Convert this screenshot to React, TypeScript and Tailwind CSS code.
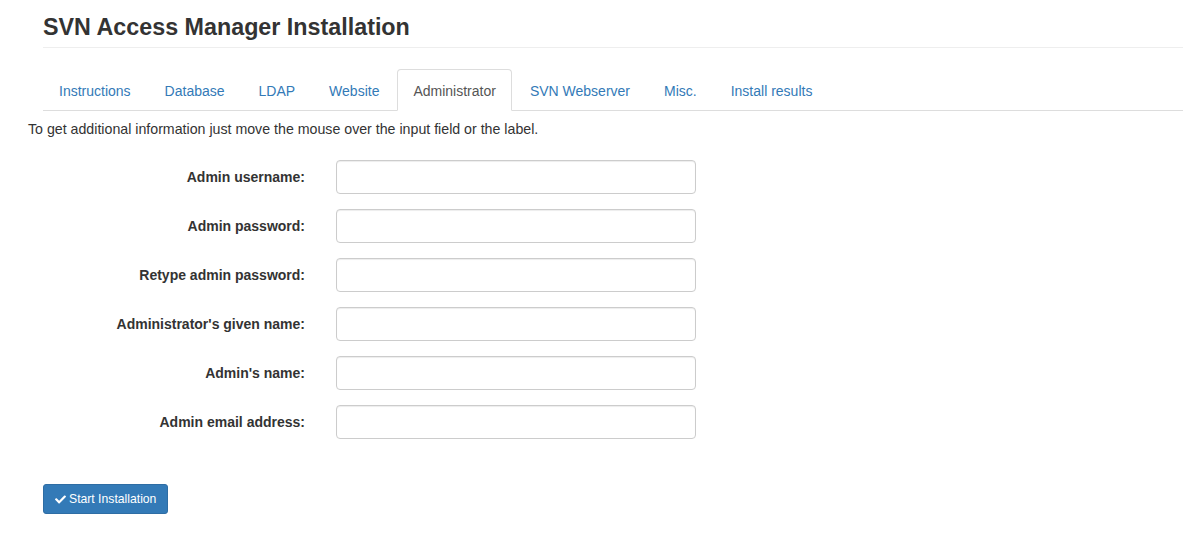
import { FaCheck } from 'react-icons/fa';

const tabs = ['Instructions', 'Database', 'LDAP', 'Website', 'Administrator', 'SVN Webserver', 'Misc.', 'Install results'];

const fields = [
  'Admin username:',
  'Admin password:',
  'Retype admin password:',
  "Administrator's given name:",
  "Admin's name:",
  'Admin email address:',
];

export default function App() {
  return (
    <div className="min-h-[555px] bg-white text-[#333] font-['Liberation_Sans',Arial,sans-serif]">
      {/* Header */}
      <div className="ml-[43px] mr-[10px] pt-[12px]">
        <h1 className="text-[23.3px] leading-[30px] font-bold text-[#333] pb-[5px] border-b border-[#eee]">
          SVN Access Manager Installation
        </h1>
      </div>

      {/* Tabs */}
      <div className="ml-[43px] mr-[10px] mt-[21px] flex border-b border-[#ddd]">
        {tabs.map((t) => {
          const active = t === 'Administrator';
          return (
            <div
              key={t}
              className={
                active
                  ? 'mr-[2px] -mb-px px-[15px] pt-[11px] pb-[9px] text-[14px] leading-[20px] text-[#555] bg-white border border-[#ddd] border-b-transparent rounded-t-[4px]'
                  : 'mr-[2px] -mb-px px-[15px] pt-[11px] pb-[9px] text-[14px] leading-[20px] text-[#337ab7] border border-transparent'
              }
            >
              {t}
            </div>
          );
        })}
      </div>

      <p className="ml-[28px] mt-[8px] text-[14.2px] leading-[20px]">
        To get additional information just move the mouse over the input field or the label.
      </p>

      {/* Form */}
      <div className="mt-[21px] flex flex-col gap-[15px]">
        {fields.map((f) => (
          <div key={f} className="flex items-center">
            <label className="w-[306px] text-right pr-[1px] text-[14px] font-bold">{f}</label>
            <input
              type="text"
              className="ml-[30px] w-[360px] h-[34px] px-3 border border-[#ccc] rounded-[4px] shadow-[inset_0_1px_1px_rgba(0,0,0,0.075)] outline-none"
            />
          </div>
        ))}
      </div>

      <div className="ml-[43px] mt-[45px]">
        <button className="h-[30px] px-[11px] flex items-center gap-[3px] bg-[#337ab7] border border-[#2e6da4] rounded-[3px] text-white text-[12.2px]">
          <FaCheck size={11} />
          Start Installation
        </button>
      </div>
    </div>
  );
}
